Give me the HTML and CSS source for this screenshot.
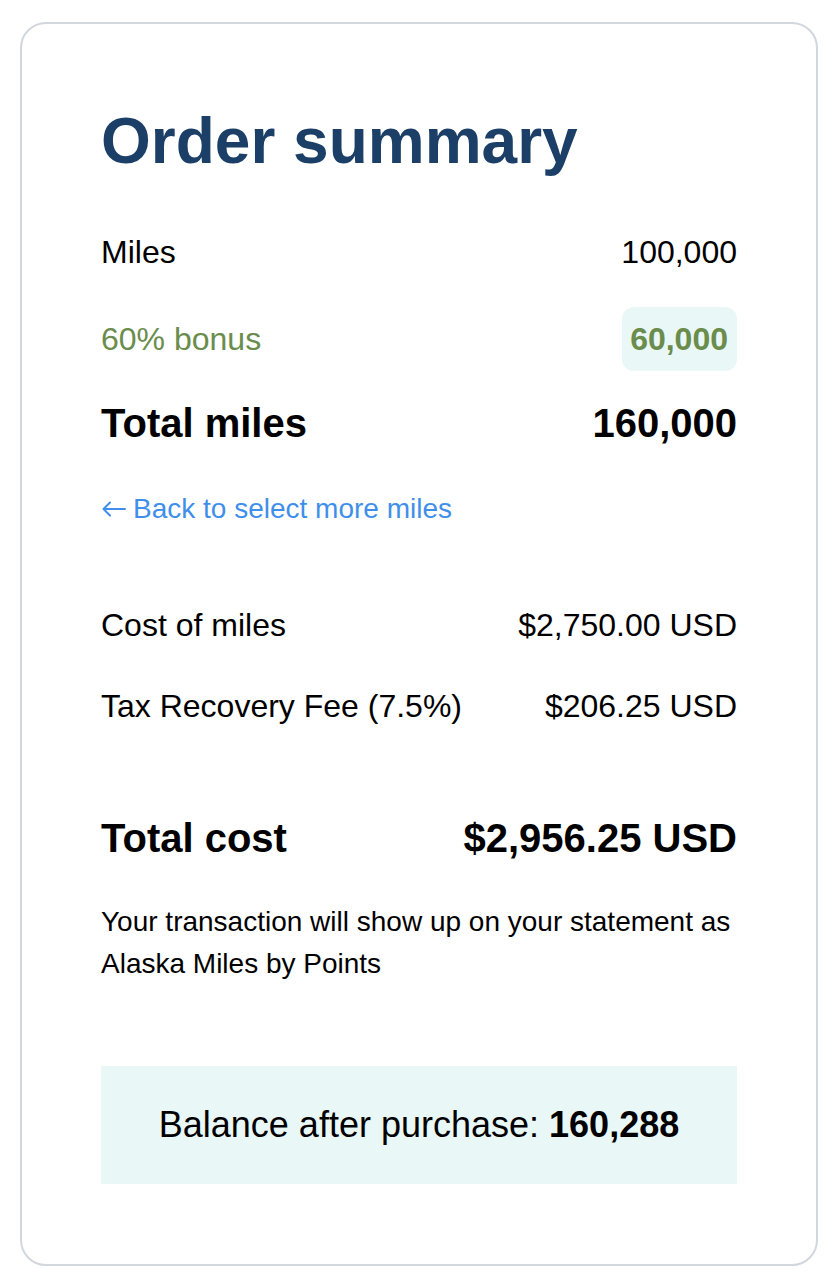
FILE: index.html
```html
<!DOCTYPE html>
<html lang="en">
<head>
<meta charset="utf-8">
<title>Order summary</title>
<link rel="stylesheet" href="styles.css">
</head>
<body>
<section class="card">
  <h1 class="title">Order summary</h1>

  <div class="row row-miles">
    <span>Miles</span>
    <span>100,000</span>
  </div>
  <div class="row row-bonus">
    <span class="bonus-label">60% bonus</span>
    <span class="badge">60,000</span>
  </div>
  <div class="row row-total total">
    <span>Total miles</span>
    <span>160,000</span>
  </div>

  <a class="back-link" href="#">
    <svg class="arrow" width="25" height="16" viewBox="0 0 25 16" aria-hidden="true">
      <path d="M24 8H2.5M9 1.5L2.5 8L9 14.5" fill="none" stroke="currentColor" stroke-width="2" stroke-linecap="round" stroke-linejoin="round"/>
    </svg>
    <span>Back to select more miles</span>
  </a>

  <div class="row row-cost">
    <span>Cost of miles</span>
    <span>$2,750.00 USD</span>
  </div>
  <div class="row row-tax">
    <span>Tax Recovery Fee (7.5%)</span>
    <span>$206.25 USD</span>
  </div>
  <div class="row row-grand total">
    <span>Total cost</span>
    <span>$2,956.25 USD</span>
  </div>

  <p class="note">Your transaction will show up on your statement as Alaska Miles by Points</p>

  <div class="balance">Balance after purchase: <strong>160,288</strong></div>
</section>
</body>
</html>
```

FILE: styles.css
```css
* { box-sizing: border-box; }

html, body {
  margin: 0;
  padding: 0;
  background: #ffffff;
}

body {
  font-family: "Liberation Sans", Arial, Helvetica, sans-serif;
  color: #000000;
}

.card {
  margin: 22px 22px 0 20px;
  border: 2px solid #d2d7dd;
  border-radius: 26px;
  padding: 79px 79px 80px 79px;
  display: flex;
  flex-direction: column;
}

.title {
  margin: 0;
  font-size: 64px;
  line-height: 76px;
  font-weight: 700;
  color: #1b3f66;
}

.row {
  display: flex;
  justify-content: space-between;
  align-items: center;
  height: 64px;
  font-size: 32px;
  line-height: 40px;
}

.row-miles { margin-top: 41px; }
.row-bonus { margin-top: 23px; }
.row-total { margin-top: 20px; }

.total {
  font-size: 40px;
  font-weight: 700;
}

.bonus-label {
  color: #6a8c4c;
}

.badge {
  display: inline-flex;
  align-items: center;
  height: 64px;
  padding: 0 9px 0 8px;
  border-radius: 12px;
  background: #e9f7f7;
  color: #6a8c4c;
  font-weight: 700;
}

.back-link {
  margin-top: 34px;
  height: 40px;
  display: inline-flex;
  align-items: center;
  gap: 7px;
  align-self: flex-start;
  color: #3f8fea;
  font-size: 28px;
  line-height: 40px;
  text-decoration: none;
}

.arrow {
  display: block;
  flex: none;
}

.row-cost { margin-top: 64px; }
.row-tax { margin-top: 17px; }
.row-grand { margin-top: 68px; }

.note {
  margin: 31px 0 0 0;
  font-size: 28px;
  line-height: 42px;
}

.balance {
  margin-top: 81px;
  height: 118px;
  display: flex;
  align-items: center;
  justify-content: center;
  gap: 0.28em;
  background: #e9f7f7;
  font-size: 36px;
  line-height: 40px;
}

.balance strong {
  font-weight: 700;
}
```
